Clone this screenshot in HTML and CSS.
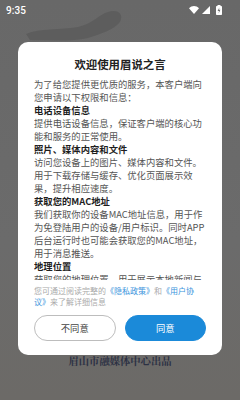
FILE: index.html
```html
<!DOCTYPE html>
<html lang="zh">
<head>
<meta charset="utf-8">
<link rel="stylesheet" href="styles.css">
</head>
<body>
<div class="screen">
  <svg class="deco" width="240" height="60" viewBox="0 0 240 60">
    <path d="M26 34 C40 28 60 30 78 27 C92 24 100 14 108 12 C118 9 124 14 120 22 C114 30 100 34 88 38 C70 42 50 40 30 40 Z" fill="#5d5d5d"/>
  </svg>
  <div class="statusbar">
    <span class="time">9:35</span>
    <span class="sicons">
      <svg width="10" height="8" viewBox="0 0 10 8"><path d="M0 2.2 C3 -0.6 7 -0.6 10 2.2 L5 8 Z" fill="#fff"/></svg>
      <svg width="8" height="8" viewBox="0 0 8 8"><path d="M8 0 L8 8 L0 8 Z" fill="#fff"/></svg>
      <svg width="6" height="10" viewBox="0 0 6 10"><rect x="1.5" y="0" width="3" height="1.2" fill="#fff"/><rect x="0" y="1" width="6" height="9" rx="0.8" fill="#fff"/><path d="M3.4 2.5 L1.6 6 L3 6 L2.6 8.5 L4.4 4.8 L3 4.8 Z" fill="#6b6b6b"/></svg>
    </span>
  </div>
  <div class="dialog">
    <h1 class="title">欢迎使用眉说之言</h1>
    <div class="scroll">
      <p>为了给您提供更优质的服务，本客户端向您申请以下权限和信息：</p>
      <h2>电话设备信息</h2>
      <p>提供电话设备信息，保证客户端的核心功能和服务的正常使用。</p>
      <h2>照片、媒体内容和文件</h2>
      <p>访问您设备上的图片、媒体内容和文件。用于下载存储与缓存、优化页面展示效果，提升相应速度。</p>
      <h2>获取您的MAC地址</h2>
      <p>我们获取你的设备MAC地址信息，用于作为免登陆用户的设备/用户标识。同时APP后台运行时也可能会获取您的MAC地址，用于消息推送。</p>
      <h2>地理位置</h2>
      <p class="last">获取您的地理位置，用于展示本地新闻与</p>
    </div>
    <p class="notice">您可通过阅读完整的<span class="link">《隐私政策》</span>和<span class="link">《用户协<br>议》</span>来了解详细信息</p>
    <div class="actions">
      <button class="btn btn-out">不同意</button>
      <button class="btn btn-fill">同意</button>
    </div>
  </div>
  <div class="credit">眉山市融媒体中心出品</div>
</div>
</body>
</html>
```
FILE: styles.css
```css
html, body {
  margin: 0;
  padding: 0;
}
body {
  width: 240px;
  height: 400px;
  overflow: hidden;
  background: #6b6a68;
  font-family: "Noto Sans CJK SC", "Noto Sans", sans-serif;
}
.screen {
  position: relative;
  width: 240px;
  height: 400px;
  background: linear-gradient(#686868 0, #6b6b6b 60%, #6c6a67 100%);
  display: flex;
  flex-direction: column;
}
.deco {
  position: absolute;
  left: 0;
  top: 0;
}
.statusbar {
  position: relative;
  height: 20px;
  display: flex;
  align-items: center;
  justify-content: space-between;
  padding: 0 18px 0 6px;
  color: #fff;
}
.time {
  font-family: Roboto, "Noto Sans", sans-serif;
  font-size: 10px;
  font-weight: 500;
  letter-spacing: 0.1px;
}
.sicons {
  display: flex;
  align-items: center;
  gap: 3px;
}
.sicons svg:last-child {
  margin-left: 3px;
}
.dialog {
  position: relative;
  margin: 22px 18px 0;
  background: #fff;
  border-radius: 10px;
  padding: 14px 16px 14px;
  display: flex;
  flex-direction: column;
}
.title {
  margin: 0;
  text-align: center;
  font-size: 11.4px;
  line-height: 16px;
  font-weight: 700;
  color: #222;
}
.scroll {
  margin-top: 6px;
  height: 202px;
  overflow: hidden;
}
.scroll p, .scroll h2 {
  margin: 0;
  font-size: 9.33px;
  line-height: 13px;
}
.scroll p {
  color: #555;
  font-weight: 400;
}
.scroll h2 {
  color: #1e1e1e;
  font-weight: 700;
}
.scroll .last {
  white-space: nowrap;
  overflow: hidden;
}
.notice {
  margin: 6px 0 0;
  font-size: 8px;
  line-height: 10.5px;
  color: #aaa;
}
.link {
  color: #3a93dc;
}
.actions {
  margin-top: 8px;
  display: flex;
  gap: 9px;
}
.btn {
  flex: 1;
  height: 26px;
  border-radius: 13px;
  font-family: "Noto Sans CJK SC", "Noto Sans", sans-serif;
  font-size: 9.3px;
  padding: 0;
}
.btn-out {
  background: #fff;
  border: 1px solid #bdbdbd;
  color: #444;
}
.btn-fill {
  background: #1b8ad9;
  border: 1px solid #1b8ad9;
  color: #fff;
}
.credit {
  margin-top: 0;
  text-align: center;
  font-family: "Noto Serif CJK SC", "Liberation Serif", "Noto Sans CJK SC", serif;
  font-size: 10.3px;
  line-height: 11px;
  font-weight: 700;
  color: #2c3144;
  letter-spacing: 0;
}
```
